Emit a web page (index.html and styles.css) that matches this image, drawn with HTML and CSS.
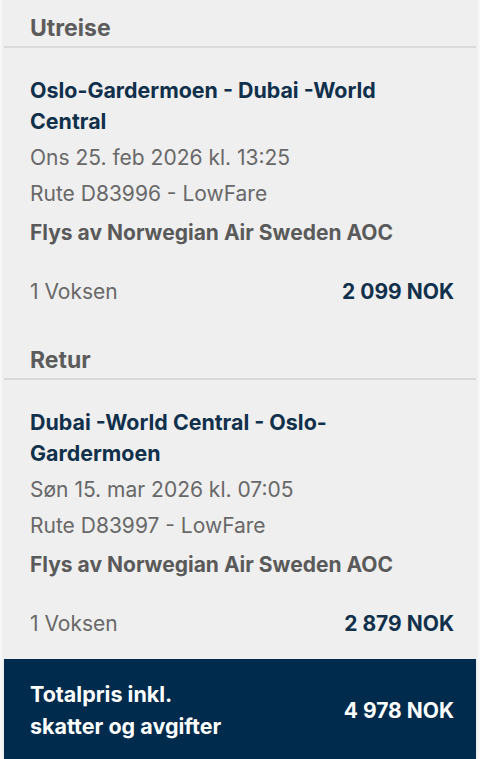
FILE: index.html
```html
<!DOCTYPE html>
<html lang="no">
<head>
<meta charset="utf-8">
<link rel="stylesheet" href="styles.css">
</head>
<body>
<div class="card">
  <div class="leg-header">Utreise</div>
  <div class="leg">
    <div class="route">Oslo-Gardermoen - Dubai -World Central</div>
    <div class="info">Ons 25. feb 2026 kl. 13:25</div>
    <div class="info">Rute D83996 - LowFare</div>
    <div class="carrier">Flys av Norwegian Air Sweden AOC</div>
    <div class="price-row">
      <span class="pax">1 Voksen</span>
      <span class="price">2 099 NOK</span>
    </div>
  </div>
  <div class="leg-header leg-header-next">Retur</div>
  <div class="leg">
    <div class="route">Dubai -World Central - Oslo-Gardermoen</div>
    <div class="info">Søn 15. mar 2026 kl. 07:05</div>
    <div class="info">Rute D83997 - LowFare</div>
    <div class="carrier">Flys av Norwegian Air Sweden AOC</div>
    <div class="price-row">
      <span class="pax">1 Voksen</span>
      <span class="price">2 879 NOK</span>
    </div>
  </div>
  <div class="total">
    <div class="total-label">Totalpris inkl.<br>skatter og avgifter</div>
    <div class="total-price">4 978 NOK</div>
  </div>
</div>
</body>
</html>
```
FILE: styles.css
```css
html, body {
  margin: 0;
  padding: 0;
  background: #f7f7f7;
  font-family: Inter, "Liberation Sans", sans-serif;
}
.card {
  margin: 0 4px;
  background: #efefef;
  box-shadow: 0 0 3px rgba(0,0,0,0.12);
  height: 759px;
  display: flex;
  flex-direction: column;
}
.leg-header {
  box-sizing: border-box;
  height: 48px;
  padding: 10px 26px 0;
  display: flex;
  align-items: center;
  font-size: 23px;
  font-weight: 700;
  color: #5c5c5c;
  border-bottom: 2px solid #d9d9d9;
  flex-shrink: 0;
}
.leg-header-next {
  margin-top: 5px;
}
.leg {
  padding: 27px 22px 24px 26px;
  flex-shrink: 0;
}
.route {
  font-size: 21.4px;
  font-weight: 700;
  color: #10304b;
  line-height: 31px;
  max-width: 380px;
  margin-bottom: 3px;
}
.info {
  font-size: 21px;
  color: #686868;
  line-height: 36px;
}
.carrier {
  font-size: 21px;
  font-weight: 700;
  color: #5a5a5a;
  line-height: 42px;
}
.price-row {
  display: flex;
  justify-content: space-between;
  align-items: center;
  height: 24px;
  margin-top: 25px;
}
.pax {
  font-size: 21px;
  color: #686868;
}
.price {
  font-size: 21px;
  font-weight: 700;
  color: #10304b;
}
.total {
  margin-top: auto;
  background: #002b4d;
  color: #fff;
  display: flex;
  justify-content: space-between;
  align-items: center;
  padding: 2px 22px 0 26px;
  height: 100px;
  box-sizing: border-box;
  flex-shrink: 0;
}
.total-label {
  font-size: 21.5px;
  font-weight: 700;
  line-height: 32px;
}
.total-price {
  font-size: 21px;
  font-weight: 700;
}
```
